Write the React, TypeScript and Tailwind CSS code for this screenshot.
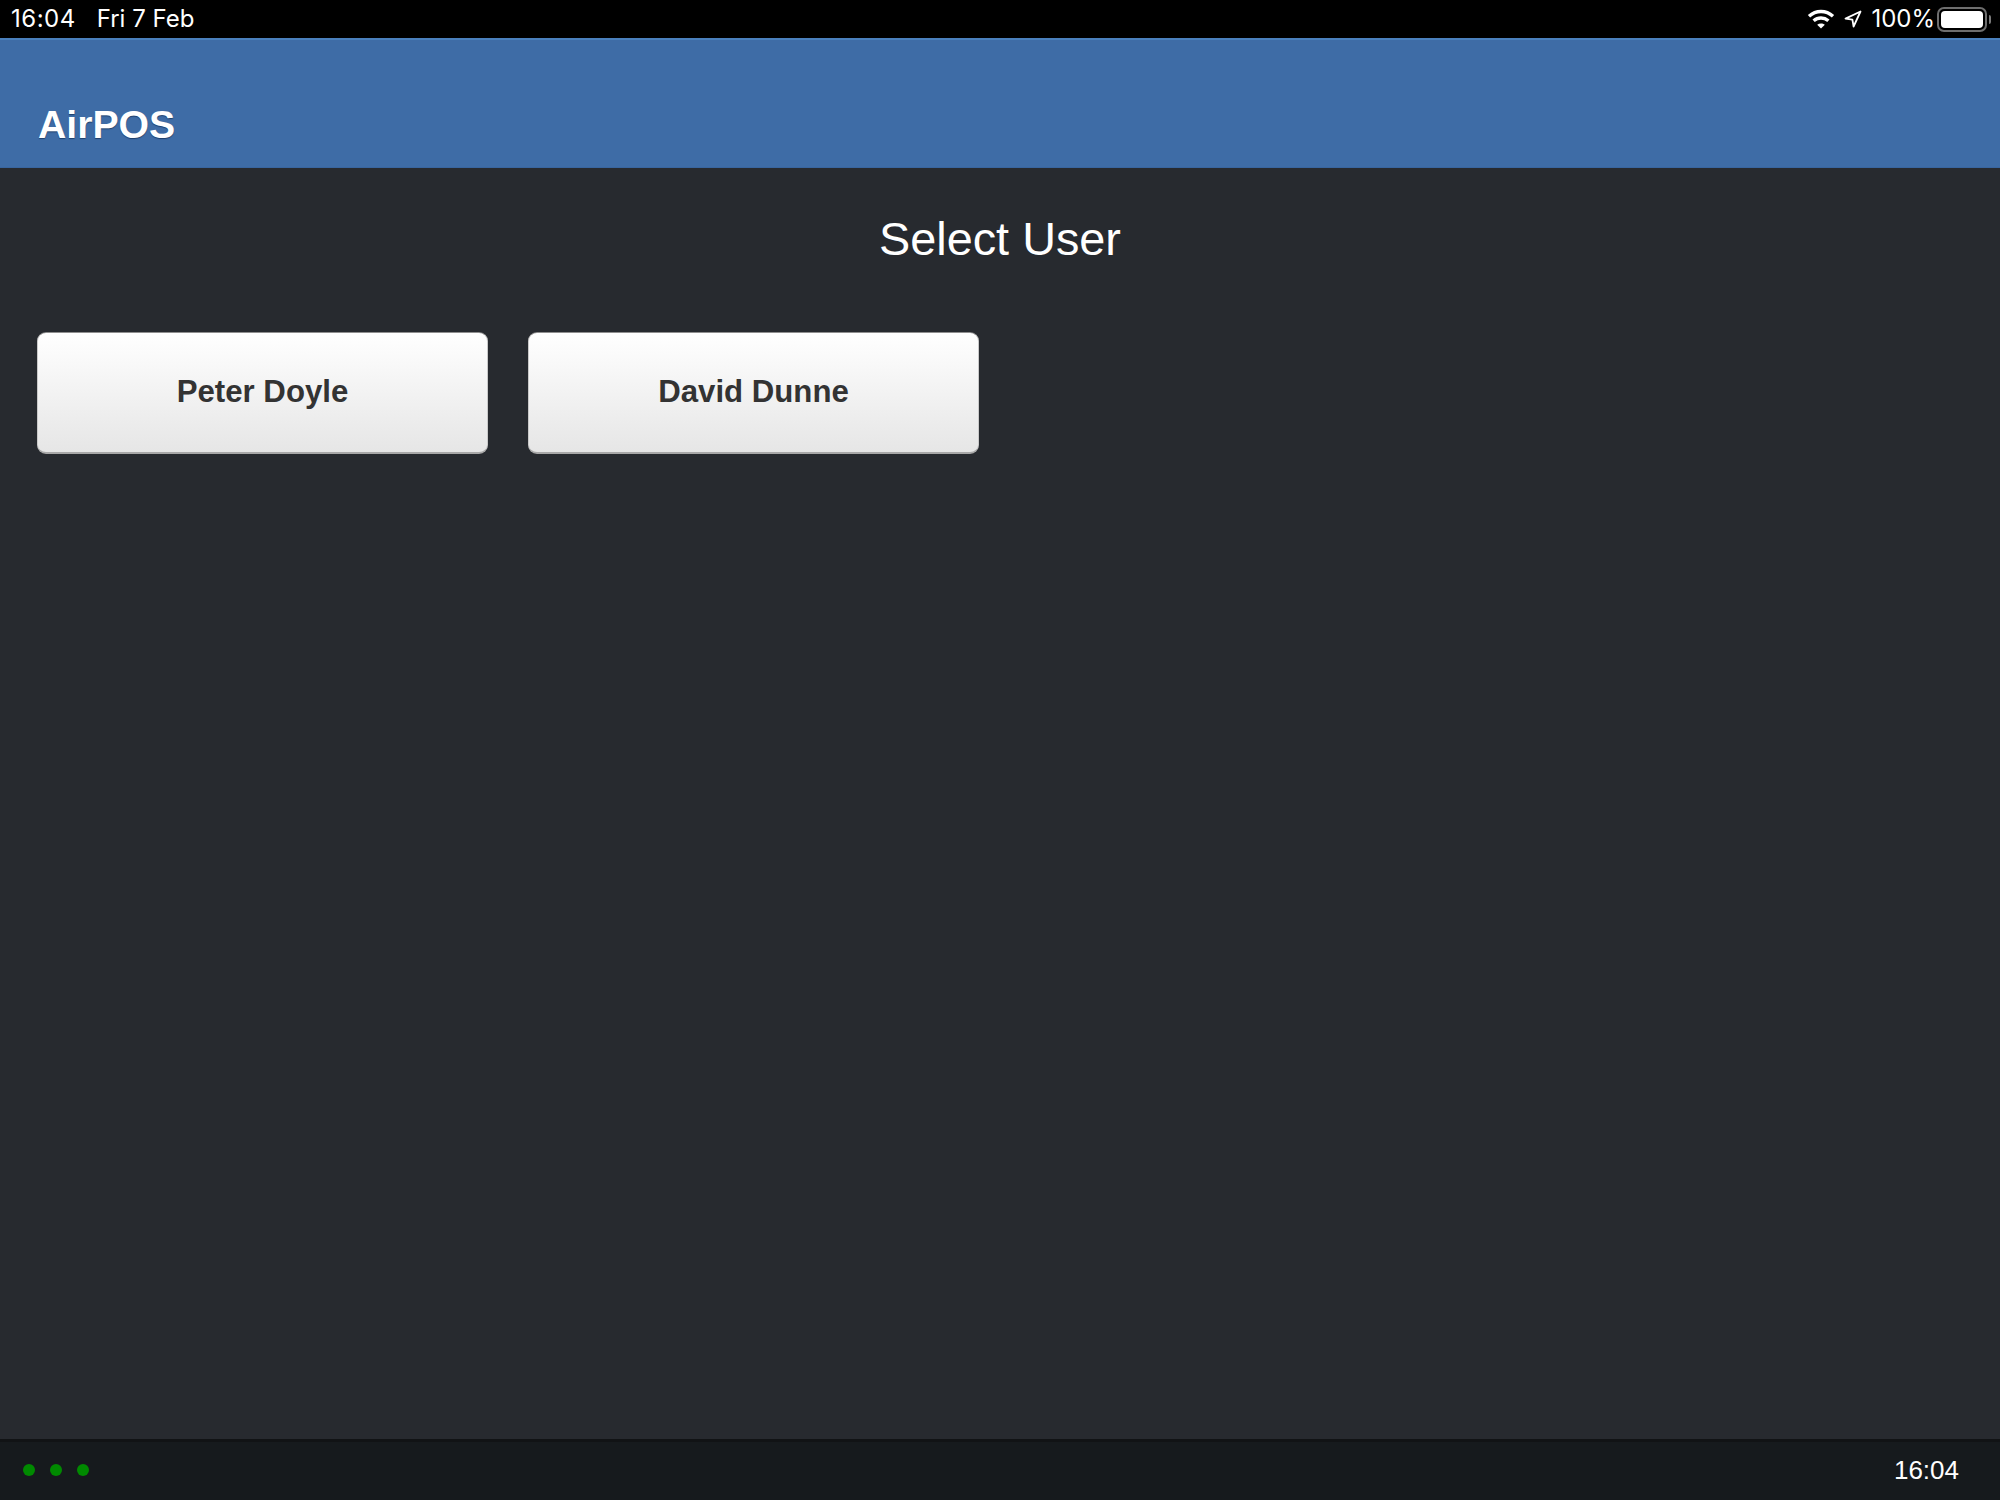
const users = ['Peter Doyle', 'David Dunne'];

const WifiIcon = () => (
  <svg width="28" height="22" viewBox="0 0 28 22" fill="none" stroke="white" strokeWidth="3.4">
    <path d="M2 8.2C9 1.9 19 1.9 26 8.2" />
    <path d="M6.6 12.8C11 9 17 9 21.4 12.8" />
    <path d="M14 20.5 L10.2 16.8C12.4 15 15.6 15 17.8 16.8Z" fill="white" stroke="none" />
  </svg>
);

const LocationIcon = () => (
  <svg width="18" height="18" viewBox="0 0 18 18" fill="none" stroke="white" strokeWidth="1.8" strokeLinejoin="round">
    <path d="M16.5 1.5 L1.5 8.6 L8.4 9.6 L9.6 16.5 Z" />
  </svg>
);

const BatteryIcon = () => (
  <div className="flex items-center">
    <div className="w-[50px] h-[25px] rounded-[7px] border-2 border-[#6e6e6e] p-[2px]">
      <div className="w-full h-full rounded-[4px] bg-white" />
    </div>
    <div className="ml-[2px] w-[2px] h-[9px] rounded-r-sm bg-[#7a7a7a]" />
  </div>
);

const StatusBar = () => (
  <div className="h-[38px] bg-black flex items-center justify-between pl-[11px] pr-[9px] text-white text-[24px] font-['Inter',sans-serif]">
    <div className="flex items-center gap-[21px]">
      <span className="tracking-[0.5px]">16:04</span>
      <span>Fri 7 Feb</span>
    </div>
    <div className="flex items-center">
      <WifiIcon />
      <div className="ml-[9px] mr-[9px]">
        <LocationIcon />
      </div>
      <span className="mr-[2px]">100%</span>
      <BatteryIcon />
    </div>
  </div>
);

export default function App() {
  return (
    <div className="w-[2000px] h-[1500px] flex flex-col bg-[#272a2f] font-['Liberation_Sans',Arial,sans-serif]">
      <StatusBar />

      {/* Header */}
      <div className="h-[130px] bg-[#3e6ca6] border-t-2 border-t-[#4a80bd] border-b border-b-[#38659f] flex items-end px-[38px] pb-[17px]">
        <h1 className="text-[39.2px] leading-[50px] font-bold text-white [text-shadow:0_1px_1px_#1f3f6b]">AirPOS</h1>
      </div>

      {/* Content */}
      <div className="flex-1 px-[37px]">
        <h2 className="mt-[44px] text-center text-[46.8px] leading-[54px] text-white">Select User</h2>
        <div className="mt-[66px] flex gap-[40px]">
          {users.map((user) => (
            <button
              key={user}
              className="w-[451px] h-[122px] rounded-[9px] border border-[#c9c9c9] border-t-[#8f8f8f] border-b-2 border-b-[#a8a8a8] bg-gradient-to-b from-white to-[#e6e6e6] text-[31.2px] font-bold text-[#333333]"
            >
              {user}
            </button>
          ))}
        </div>
      </div>

      {/* Footer */}
      <div className="h-[61px] pb-[2px] bg-[#161a1d] border-t-[3px] border-t-[#111315] flex items-center justify-between pl-[23px] pr-[41px]">
        <div className="flex gap-[15px]">
          <div className="w-[12px] h-[12px] rounded-full bg-[#008a00]" />
          <div className="w-[12px] h-[12px] rounded-full bg-[#008a00]" />
          <div className="w-[12px] h-[12px] rounded-full bg-[#008a00]" />
        </div>
        <span className="text-[26px] text-white">16:04</span>
      </div>
    </div>
  );
}
